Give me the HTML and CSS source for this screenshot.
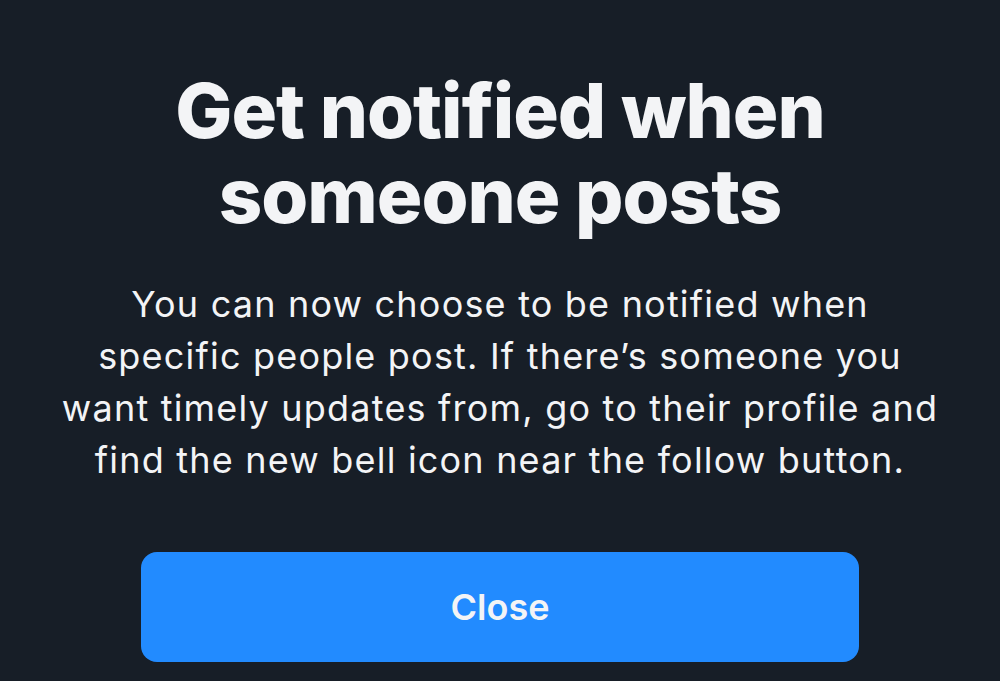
FILE: index.html
```html
<!DOCTYPE html>
<html lang="en">

<head>
    <meta charset="UTF-8">
    <meta name="viewport" content="width=device-width, initial-scale=1.0">
    <title>Get notified</title>

    <link rel="stylesheet" href="styles.css">
</head>

<body>
    <div class="sheet">
        <h1 class="title">Get notified when someone posts</h1>
        <p class="text">You can now choose to be notified when specific people post. If there’s someone you want timely updates from, go to their profile and find the new bell icon near the follow button.</p>
        <button class="close">Close</button>
    </div>
</body>

</html>
```

FILE: styles.css
```css
body {
    margin: 0;
    background: #171e27;
    font-family: Inter, "Noto Sans", sans-serif;
    color: #f3f4f6;
}

.sheet {
    display: flex;
    flex-direction: column;
    align-items: center;
    padding-top: 68px;
}

.title {
    width: 700px;
    margin: 0;
    font-size: 76px;
    font-weight: 800;
    line-height: 85px;
    letter-spacing: -1px;
    text-align: center;
}

.text {
    width: 890px;
    margin: 40px 0 0;
    font-size: 36px;
    font-weight: 400;
    line-height: 52px;
    letter-spacing: 1.2px;
    text-align: center;
}

.close {
    width: 718px;
    height: 110px;
    margin-top: 66px;
    border: none;
    border-radius: 16px;
    background: #228bff;
    color: #f3f4f6;
    font-family: Inter, "Noto Sans", sans-serif;
    font-size: 36px;
    font-weight: 600;
    cursor: pointer;
}
```
